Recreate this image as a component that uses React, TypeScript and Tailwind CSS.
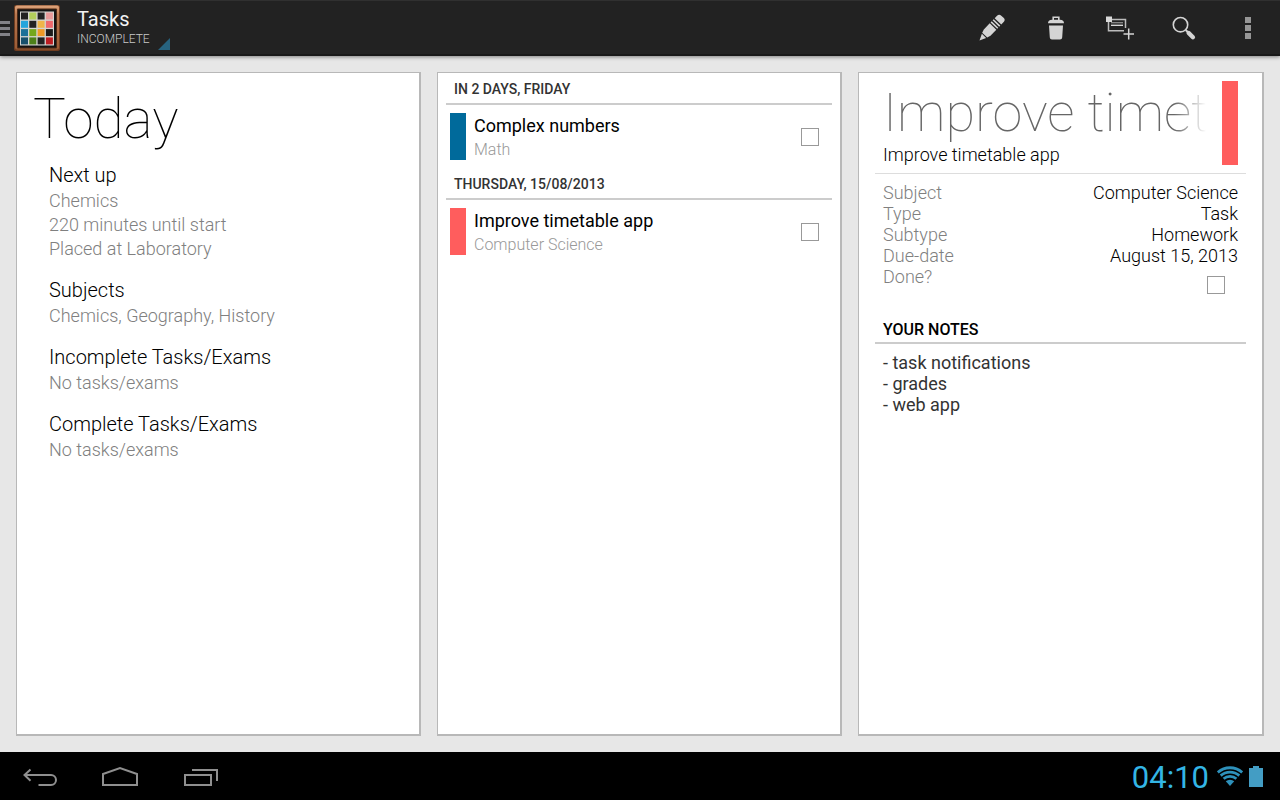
import { useState } from "react";
import type { ReactNode } from "react";

interface Task {
    id: number;
    heading: string;
    title: string;
    subject: string;
    color: string;
}

const summary = [
    {
        title: "Next up",
        lines: ["Chemics", "220 minutes until start", "Placed at Laboratory"],
    },
    { title: "Subjects", lines: ["Chemics, Geography, History"] },
    { title: "Incomplete Tasks/Exams", lines: ["No tasks/exams"] },
    { title: "Complete Tasks/Exams", lines: ["No tasks/exams"] },
];

const tasks: Task[] = [
    {
        id: 1,
        heading: "IN 2 DAYS, FRIDAY",
        title: "Complex numbers",
        subject: "Math",
        color: "bg-[#006a9b]",
    },
    {
        id: 2,
        heading: "THURSDAY, 15/08/2013",
        title: "Improve timetable app",
        subject: "Computer Science",
        color: "bg-[#ff5d5d]",
    },
];

const details = [
    ["Subject", "Computer Science"],
    ["Type", "Task"],
    ["Subtype", "Homework"],
    ["Due-date", "August 15, 2013"],
];

const logoColors = [
    "#222", "#b3cf5c", "#222", "#e89a9a",
    "#25a5dc", "#222", "#efb54a", "#ee686c",
    "#1c7098", "#74a71c", "#ee9a27", "#1c1c1c",
    "#17506c", "#4d8019", "#222", "#bd1d22",
];

function Logo() {
    return (
        <svg width="46" height="46" viewBox="0 0 46 46" aria-hidden="true">
            <defs>
                <linearGradient id="frame" x1="0" y1="0" x2="0" y2="1">
                    <stop offset="0" stopColor="#e0a57c" />
                    <stop offset="0.2" stopColor="#b97850" />
                    <stop offset="1" stopColor="#9a5c36" />
                </linearGradient>
            </defs>
            <rect width="46" height="46" rx="2" fill="#6f3d20" />
            <rect x="1" y="0.5" width="44" height="44" rx="2" fill="url(#frame)" />
            <rect x="3" y="3.5" width="40" height="40" rx="1" fill="#4a2815" />
            <rect x="4" y="4.5" width="38" height="38" fill="#131313" />
            <rect x="6" y="6.5" width="34" height="34" fill="#d5d5d2" />
            {logoColors.map((color, i) => (
                <rect
                    key={i}
                    x={7 + (i % 4) * 8.3}
                    y={7.5 + Math.floor(i / 4) * 8.3}
                    width="7"
                    height="7"
                    fill={color}
                />
            ))}
        </svg>
    );
}

function ActionButton({ label, children }: { label: string; children: ReactNode }) {
    return (
        <button
            aria-label={label}
            className="flex w-16 items-center justify-center hover:bg-white/10"
        >
            <svg width="32" height="32" viewBox="0 0 32 32" fill="none">
                {children}
            </svg>
        </button>
    );
}

function Checkbox({ label, id }: { label?: string; id?: string }) {
    const [checked, setChecked] = useState(false);

    return (
        <input
            id={id}
            type="checkbox"
            aria-label={label}
            checked={checked}
            onChange={(e) => setChecked(e.target.checked)}
            className="size-4 shrink-0 appearance-none bg-white outline outline-[#999] checked:bg-[#33b5e5]"
        />
    );
}

function Card({ className, children }: { className: string; children: ReactNode }) {
    return (
        <section
            className={`min-w-0 border border-r-2 border-b-2 border-[#b8b8b8] bg-white ${className}`}
        >
            {children}
        </section>
    );
}

function ActionBar() {
    return (
        <header className="flex h-14 shrink-0 border-t border-b-2 border-t-[#303030] border-b-[#191919] bg-[#222] shadow-[0_1px_4px_rgba(0,0,0,0.45)]">
            <button aria-label="Open drawer" className="flex items-center">
                <span className="flex w-[10px] flex-col gap-[3px] pt-0.5">
                    <span className="h-[3px] bg-[#828287]" />
                    <span className="h-[3px] bg-[#828287]" />
                    <span className="h-[3px] bg-[#828287]" />
                </span>
                <span className="ml-1">
                    <Logo />
                </span>
            </button>

            <button className="relative ml-2 flex w-[102px] flex-col justify-center pb-0.5 pl-[9px] text-left">
                <span className="text-xl leading-6 text-[#f3f3f3]">Tasks</span>
                <span className="text-xs leading-4 font-light text-[#cacaca]">INCOMPLETE</span>
                <svg
                    className="absolute right-0 bottom-1"
                    width="12"
                    height="12"
                    viewBox="0 0 12 12"
                >
                    <path d="M12 0v12H0z" fill="#27637f" />
                </svg>
            </button>

            <div className="ml-auto flex">
                <ActionButton label="Edit">
                    <g fill="#d4d4d4" transform="translate(3.5 28.5) rotate(-46)">
                        <path d="M0 0 6.5-3v6z" />
                        <path d="M7.5-3.5 11-4.6h8.500v9.200H11L7.500 3.500z" />
                        <path d="M20.700-4.600h1.600v9.200h-1.600zM23.600-4.600h1.600v9.200h-1.600z" />
                        <path d="M26.600-4.600h3.400q3 0 3 3v3.200q0 3-3 3h-3.400z" />
                    </g>
                </ActionButton>
                <ActionButton label="Delete">
                    <path d="M13.200 8.500V5.300h5.600v3.200" stroke="#d4d4d4" strokeWidth="1.600" />
                    <path
                        d="M8 11.200q0-3.200 4-3.400h8q4 .2 4 3.400zM9 13.500h14l-.8 12q-.1 2-2.200 2h-8q-2.100 0-2.200-2z"
                        fill="#d4d4d4"
                    />
                </ActionButton>
                <ActionButton label="Add task">
                    <path d="M20 18.800H4.500V7.500h17V16" stroke="#bcbcbc" strokeWidth="1.500" />
                    <path d="M7 10.700h12" stroke="#8d8d8d" strokeWidth="1.300" />
                    <path d="M7 13.300h12" stroke="#e2e2e2" strokeWidth="1.300" />
                    <path d="M2 4.500h6V10H2z" fill="#d9d9d9" />
                    <path d="M19.500 22h10.500M24.700 16.500v11" stroke="#d4d4d4" strokeWidth="1.500" />
                </ActionButton>
                <ActionButton label="Search">
                    <circle cx="12.500" cy="12.700" r="7.200" stroke="#d4d4d4" strokeWidth="1.600" />
                    <path d="m17.700 18 2.500 2.500" stroke="#d4d4d4" strokeWidth="2" />
                    <path
                        d="m20.700 21 4.200 4.200"
                        stroke="#d4d4d4"
                        strokeWidth="4.400"
                        strokeLinecap="round"
                    />
                </ActionButton>
                <ActionButton label="More options">
                    <path d="M13 5h6v6h-6zM13 13h6v6h-6zM13 21h6v6h-6z" fill="#969696" />
                </ActionButton>
            </div>
        </header>
    );
}

function TodayCard() {
    return (
        <Card className="px-8 pt-3">
            <h1 className="-ml-4 text-[55px] leading-[68px] font-thin">Today</h1>
            <div className="mt-2 flex flex-col gap-[15px]">
                {summary.map((block) => (
                    <div key={block.title}>
                        <h2 className="text-xl leading-7 font-light">{block.title}</h2>
                        {block.lines.map((line) => (
                            <p
                                key={line}
                                className="text-lg leading-6 font-light text-[#808080]"
                            >
                                {line}
                            </p>
                        ))}
                    </div>
                ))}
            </div>
        </Card>
    );
}

function TaskListCard() {
    return (
        <Card className="px-2">
            {tasks.map((task) => (
                <div key={task.id}>
                    <h2 className="h-8 border-b-2 border-[#ccc] px-2 pt-1 text-sm leading-6 font-medium text-[#333]">
                        {task.heading}
                    </h2>
                    <div className="flex items-center py-2 pr-[14px] pl-1">
                        <span className={`h-[47px] w-4 ${task.color}`} />
                        <div className="ml-2 min-w-0 flex-1">
                            <p className="truncate text-lg leading-[26px]">{task.title}</p>
                            <p className="truncate text-base leading-[21px] font-light text-[#999]">
                                {task.subject}
                            </p>
                        </div>
                        <Checkbox label={`Complete ${task.title}`} />
                    </div>
                </div>
            ))}
        </Card>
    );
}

function DetailCard() {
    return (
        <Card className="px-4">
            <div className="flex border-b border-[#ddd] p-2">
                <div className="min-w-0 flex-1 pr-4">
                    <h1 className="overflow-hidden text-[54px] leading-[63px] font-thin whitespace-nowrap text-[#666] [mask-image:linear-gradient(to_right,black_calc(100%-32px),transparent)]">
                        Improve timetable app
                    </h1>
                    <p className="text-lg leading-[21px] font-light">Improve timetable app</p>
                </div>
                <span className="w-4 bg-[#ff5d5d]" />
            </div>

            <div className="p-2 text-lg leading-[21px] font-light">
                <dl>
                    {details.map(([name, value]) => (
                        <div key={name} className="flex justify-between">
                            <dt className="text-[#808080]">{name}</dt>
                            <dd>{value}</dd>
                        </div>
                    ))}
                </dl>
                <div className="flex justify-between pr-[14px]">
                    <label htmlFor="done" className="text-[#808080]">
                        Done?
                    </label>
                    <span className="flex h-[38px] items-center">
                        <Checkbox id="done" />
                    </span>
                </div>
            </div>

            <h2 className="mt-1.5 border-b-2 border-[#ccc] px-2 text-base leading-6 font-medium">
                YOUR NOTES
            </h2>
            <ul className="p-2 text-lg leading-[21px] text-[#333]">
                <li>- task notifications</li>
                <li>- grades</li>
                <li>- web app</li>
            </ul>
        </Card>
    );
}

function SystemBar() {
    return (
        <footer className="flex h-12 shrink-0 items-center bg-black">
            <button aria-label="Back" className="flex w-20 justify-center pt-1">
                <svg width="40" height="24" viewBox="0 0 40 24" fill="none">
                    <path
                        d="M4 9h27a5 5 0 0 1 0 10H18.500M10.500 3.500 4.500 9l6 5.800"
                        stroke="#8f8f8f"
                        strokeWidth="2"
                    />
                </svg>
            </button>
            <button aria-label="Home" className="flex w-20 justify-center pt-1">
                <svg width="40" height="24" viewBox="0 0 40 24" fill="none">
                    <path d="M3 19V8l17-6 17 6v11z" stroke="#8f8f8f" strokeWidth="2" />
                </svg>
            </button>
            <button aria-label="Recent apps" className="flex w-20 justify-center pt-1">
                <svg width="40" height="24" viewBox="0 0 40 24" fill="none">
                    <path
                        d="M5 9h26v10H5zM12 4h25v11"
                        stroke="#8f8f8f"
                        strokeWidth="2"
                    />
                </svg>
            </button>

            <div className="ml-auto flex items-center pr-[17px]">
                <span className="pt-1 text-[31px] leading-9 text-[#33b5e5]">04:10</span>
                <svg className="ml-2" width="26" height="20" viewBox="0 0 26 20" fill="none">
                    <path
                        d="M.8 6.400a18.300 18.300 0 0 1 24.400 0M3.700 9.600a14 14 0 0 1 18.600 0M6.600 12.800a9.600 9.600 0 0 1 12.800 0"
                        stroke="#2e91bb"
                        strokeWidth="2.800"
                    />
                    <path d="M8.800 15.300a6.300 6.300 0 0 1 8.400 0L13 20z" fill="#2e91bb" />
                </svg>
                <svg className="ml-[6px]" width="14" height="21" viewBox="0 0 14 21">
                    <path d="M4 0h6v2h4v19H0V2h4z" fill="#439dc4" />
                </svg>
            </div>
        </footer>
    );
}

export default function App() {
    return (
        <div className="flex min-h-screen flex-col bg-[#e7e7e7] font-[Roboto,sans-serif] text-black">
            <ActionBar />
            <main className="grid flex-1 grid-cols-[405fr_405fr_406fr] gap-4 p-4">
                <TodayCard />
                <TaskListCard />
                <DetailCard />
            </main>
            <SystemBar />
        </div>
    );
}
